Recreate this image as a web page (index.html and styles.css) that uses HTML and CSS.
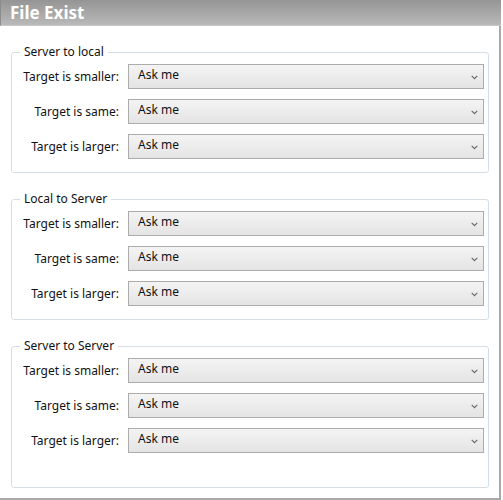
FILE: index.html
```html
<!DOCTYPE html>
<html>
<head>
<meta charset="utf-8">
<link rel="stylesheet" href="styles.css">
</head>
<body>
<div class="window">
  <div class="titlebar">File Exist</div>
  <div class="content">
    <fieldset class="group">
      <legend>Server to local</legend>
      <div class="rows">
        <label class="lbl">Target is smaller:</label>
        <div class="select"><span>Ask me</span><svg class="chev" width="7" height="5" viewBox="0 0 7 5"><path d="M0.7 0.8 L3.5 3.6 L6.3 0.8" fill="none" stroke="#6a6a6a" stroke-width="1.2"/></svg></div>
        <label class="lbl">Target is same:</label>
        <div class="select"><span>Ask me</span><svg class="chev" width="7" height="5" viewBox="0 0 7 5"><path d="M0.7 0.8 L3.5 3.6 L6.3 0.8" fill="none" stroke="#6a6a6a" stroke-width="1.2"/></svg></div>
        <label class="lbl">Target is larger:</label>
        <div class="select"><span>Ask me</span><svg class="chev" width="7" height="5" viewBox="0 0 7 5"><path d="M0.7 0.8 L3.5 3.6 L6.3 0.8" fill="none" stroke="#6a6a6a" stroke-width="1.2"/></svg></div>
      </div>
    </fieldset>
    <fieldset class="group">
      <legend>Local to Server</legend>
      <div class="rows">
        <label class="lbl">Target is smaller:</label>
        <div class="select"><span>Ask me</span><svg class="chev" width="7" height="5" viewBox="0 0 7 5"><path d="M0.7 0.8 L3.5 3.6 L6.3 0.8" fill="none" stroke="#6a6a6a" stroke-width="1.2"/></svg></div>
        <label class="lbl">Target is same:</label>
        <div class="select"><span>Ask me</span><svg class="chev" width="7" height="5" viewBox="0 0 7 5"><path d="M0.7 0.8 L3.5 3.6 L6.3 0.8" fill="none" stroke="#6a6a6a" stroke-width="1.2"/></svg></div>
        <label class="lbl">Target is larger:</label>
        <div class="select"><span>Ask me</span><svg class="chev" width="7" height="5" viewBox="0 0 7 5"><path d="M0.7 0.8 L3.5 3.6 L6.3 0.8" fill="none" stroke="#6a6a6a" stroke-width="1.2"/></svg></div>
      </div>
    </fieldset>
    <fieldset class="group last">
      <legend>Server to Server</legend>
      <div class="rows">
        <label class="lbl">Target is smaller:</label>
        <div class="select"><span>Ask me</span><svg class="chev" width="7" height="5" viewBox="0 0 7 5"><path d="M0.7 0.8 L3.5 3.6 L6.3 0.8" fill="none" stroke="#6a6a6a" stroke-width="1.2"/></svg></div>
        <label class="lbl">Target is same:</label>
        <div class="select"><span>Ask me</span><svg class="chev" width="7" height="5" viewBox="0 0 7 5"><path d="M0.7 0.8 L3.5 3.6 L6.3 0.8" fill="none" stroke="#6a6a6a" stroke-width="1.2"/></svg></div>
        <label class="lbl">Target is larger:</label>
        <div class="select"><span>Ask me</span><svg class="chev" width="7" height="5" viewBox="0 0 7 5"><path d="M0.7 0.8 L3.5 3.6 L6.3 0.8" fill="none" stroke="#6a6a6a" stroke-width="1.2"/></svg></div>
      </div>
    </fieldset>
  </div>
</div>
</body>
</html>
```
FILE: styles.css
```css
html, body {
  margin: 0;
  padding: 0;
  background: #ffffff;
}
body {
  font-family: "Noto Sans", "Open Sans", sans-serif;
  font-size: 12px;
  color: #111111;
}
.window {
  width: 499px;
  height: 498px;
  border-right: 2px solid #a9a9a9;
  border-bottom: 2px solid #a9a9a9;
  box-sizing: content-box;
  display: flex;
  flex-direction: column;
}
.titlebar {
  height: 26px;
  margin-right: -2px;
  box-sizing: border-box;
  background: linear-gradient(#959595, #b9b9b9);
  border-left: 1px solid #8c8c8c;
  border-bottom: 1px solid #c9c9c9;
  color: #ffffff;
  font-weight: bold;
  font-size: 17px;
  line-height: 25px;
  padding-left: 9px;
}
.content {
  display: flex;
  flex-direction: column;
  gap: 18px;
  padding: 18px 10px 0 11px;
}
.group {
  margin: 0;
  padding: 4px 4px 13px 0;
  border: 1px solid #d6dee5;
  border-radius: 3px;
  min-width: 0;
}
.group.last {
  padding-bottom: 34px;
}
.group legend {
  margin-left: 8px;
  padding: 0 4px;
  line-height: 16px;
  font-size: 12px;
}
.rows {
  display: grid;
  grid-template-columns: 107px 1fr;
  column-gap: 9px;
  row-gap: 10px;
  align-items: center;
}
.lbl {
  text-align: right;
  white-space: nowrap;
  padding-bottom: 1px;
}
.select {
  height: 25px;
  box-sizing: border-box;
  border: 1px solid #acacac;
  background: linear-gradient(#f4f4f4, #e4e4e4);
  display: flex;
  align-items: center;
  justify-content: space-between;
  padding: 0 5px 3px 9px;
}
.select span {
  line-height: 16px;
}
.chev {
  display: block;
  margin-top: 4px;
}
```
